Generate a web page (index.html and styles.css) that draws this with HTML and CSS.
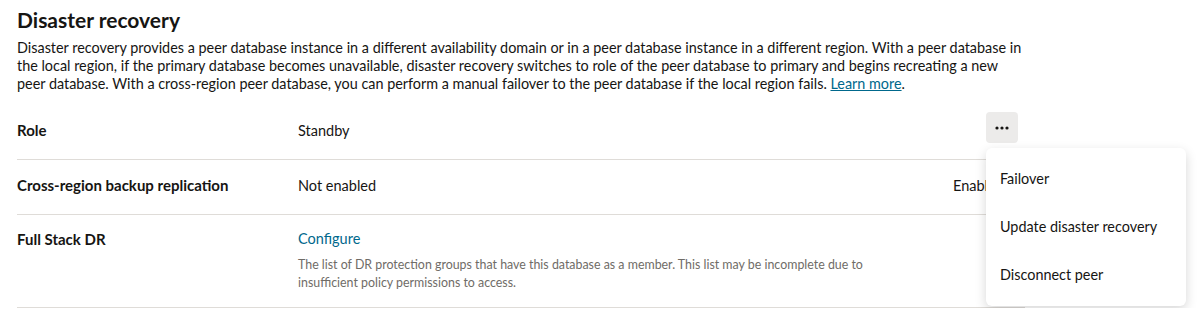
FILE: index.html
```html
<!DOCTYPE html>
<html>
<head>
<meta charset="utf-8">
<link rel="stylesheet" href="styles.css">
</head>
<body>
<div class="page">
  <h2 class="title">Disaster recovery</h2>
  <p class="desc">Disaster recovery provides a peer database instance in a different availability domain or in a peer database instance in a different region. With a peer database in the local region, if the primary database becomes unavailable, disaster recovery switches to role of the peer database to primary and begins recreating a new peer database. With a cross-region peer database, you can perform a manual failover to the peer database if the local region fails. <a class="link" href="#">Learn more</a>.</p>
  <div class="rows">
    <div class="row row-short">
      <div class="label">Role</div>
      <div class="value">Standby</div>
      <div class="action action-btn">
        <button class="more" aria-label="Actions">
          <svg width="14" height="4" viewBox="0 0 14 4"><circle cx="2" cy="2" r="1.6"/><circle cx="7" cy="2" r="1.6"/><circle cx="12" cy="2" r="1.6"/></svg>
        </button>
      </div>
    </div>
    <div class="row row-short">
      <div class="label">Cross-region backup replication</div>
      <div class="value">Not enabled</div>
      <div class="action action-text">Enable</div>
    </div>
    <div class="row row-tall">
      <div class="label">Full Stack DR</div>
      <div class="value">
        <a class="link-plain" href="#">Configure</a>
        <p class="hint">The list of DR protection groups that have this database as a member. This list may be incomplete due to insufficient policy permissions to access.</p>
      </div>
    </div>
  </div>
  <div class="menu">
    <div class="menu-item">Failover</div>
    <div class="menu-item">Update disaster recovery</div>
    <div class="menu-item">Disconnect peer</div>
  </div>
</div>
</body>
</html>
```
FILE: styles.css
```css
* { box-sizing: border-box; }
body {
  margin: 0;
  background: #fff;
  color: #161513;
  font-family: "Lato", "Liberation Sans", sans-serif;
}
.page {
  position: relative;
  width: 1025px;
  padding: 7px 0 0 17px;
}
.title {
  margin: 0;
  font-size: 21px;
  line-height: 26px;
  font-weight: 700;
}
.desc {
  margin: 6px 0 0 0;
  font-size: 14.4px;
  line-height: 18px;
  width: 1008px;
}
.link {
  color: #00688c;
  text-decoration: underline;
}
.rows {
  margin-top: 12px;
}
.row {
  display: flex;
  border-bottom: 1px solid #dfdcd8;
  font-size: 14.5px;
}
.row-short {
  height: 55px;
  align-items: center;
  padding-bottom: 4px;
}
.row-tall {
  padding-top: 15px;
  height: 93px;
}
.label {
  width: 281px;
  font-weight: 700;
  font-size: 15px;
  flex: none;
}
.value {
  flex: 1;
}
.action {
  flex: none;
  padding-right: 7px;
}
.action-btn {
  align-self: flex-start;
  margin-top: 7px;
}
.action-text {
  width: 72px;
}
.more {
  width: 32px;
  height: 31px;
  border: none;
  border-radius: 4px;
  background: #ecebea;
  display: flex;
  align-items: center;
  justify-content: center;
  padding: 0;
  fill: #161513;
}
.link-plain {
  color: #00688c;
  text-decoration: none;
  line-height: 18px;
}
.hint {
  margin: 8px 0 0 0;
  font-size: 12.4px;
  line-height: 18px;
  color: #6f6c67;
  width: 590px;
}
.menu {
  position: absolute;
  left: 986px;
  top: 148px;
  width: 200px;
  padding: 6px 0 8px;
  background: #fff;
  border-radius: 6px;
  box-shadow: 0 4px 12px rgba(0,0,0,0.16);
}
.menu-item {
  height: 48px;
  display: flex;
  align-items: center;
  padding-left: 14px;
  font-size: 14.4px;
}
```
